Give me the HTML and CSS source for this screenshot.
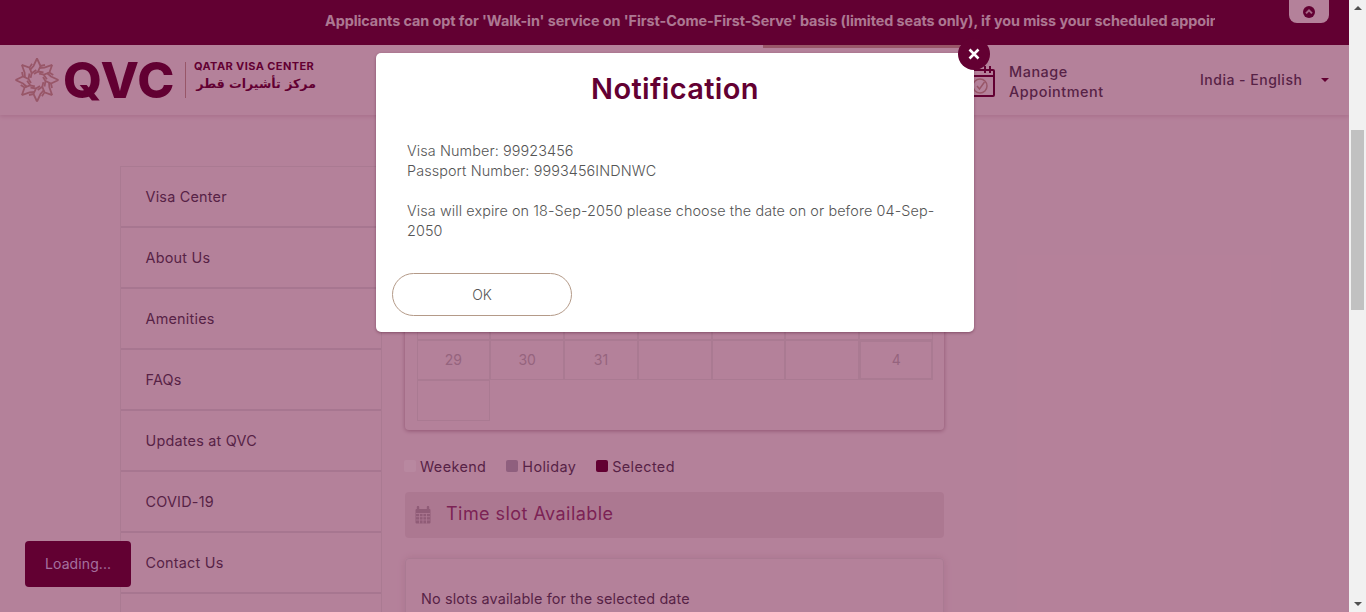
FILE: index.html
```html
<!DOCTYPE html>
<html lang="en">
<head>
<meta charset="utf-8">
<title>Qatar Visa Center</title>
<link rel="stylesheet" href="styles.css">
</head>
<body>
<div class="window">
  <div class="page">
    <div class="topbar">
      <div class="marquee">Applicants can opt for 'Walk-in' service on 'First-Come-First-Serve' basis (limited seats only), if you miss your scheduled appointment</div>
      <div class="toggle">
        <svg class="toggle-icon" viewBox="0 0 12 12"><circle cx="6" cy="6" r="6" fill="#630032"/><path d="M3 7.400 6 4.400l3 3" fill="none" stroke="#d9b9c8" stroke-width="2"/></svg>
      </div>
    </div>
    <header class="header">
      <div class="logo">
        <svg class="star" viewBox="-22 -22 44 44">
          <defs><path id="petal" d="M0-21.500 3.500-14 1-8.500 6.500-7.500M0-21.500-3.500-14-7-10M3.500-14 8-15M1-8.500-3-6" fill="none" stroke="#c29a92" stroke-width="1.800"/></defs>
          <use href="#petal"/><use href="#petal" transform="rotate(45)"/><use href="#petal" transform="rotate(90)"/><use href="#petal" transform="rotate(135)"/><use href="#petal" transform="rotate(180)"/><use href="#petal" transform="rotate(225)"/><use href="#petal" transform="rotate(270)"/><use href="#petal" transform="rotate(315)"/>
        </svg>
        <span class="logo-mark">QVC</span>
        <span class="logo-rule"></span>
        <span class="logo-names">
          <span class="logo-en">QATAR VISA CENTER</span>
          <span class="logo-ar" lang="ar" dir="rtl">مركز تأشيرات قطر</span>
        </span>
      </div>
      <span class="tab-mark"></span>
      <svg class="cal-icon" viewBox="0 0 25 34"><path d="M2 7h21a1 1 0 0 1 1 1v24a1 1 0 0 1-1 1H2a1 1 0 0 1-1-1V8a1 1 0 0 1 1-1ZM1 13h23" fill="none" stroke="#630032" stroke-width="2"/><path d="M15 3v7M20 3v7" stroke="#630032" stroke-width="2"/><circle cx="10" cy="23" r="7" fill="none" stroke="#c29a92" stroke-width="1.500"/><path d="m7 23 2.500 3 5-7" fill="none" stroke="#c29a92" stroke-width="1.500"/></svg>
      <div class="manage">Manage<br>Appointment</div>
      <div class="lang">India - English</div>
      <span class="caret"></span>
    </header>
    <div class="content">
      <nav class="sidebar">
        <a class="side-item">Visa Center</a>
        <a class="side-item">About Us</a>
        <a class="side-item">Amenities</a>
        <a class="side-item">FAQs</a>
        <a class="side-item">Updates at QVC</a>
        <a class="side-item">COVID-19</a>
        <a class="side-item">Contact Us</a>
        <a class="side-item"></a>
      </nav>
      <main class="main">
        <section class="calendar">
          <div class="day"></div><div class="day"></div><div class="day"></div><div class="day"></div><div class="day"></div><div class="day"></div><div class="day"></div>
          <div class="day"></div><div class="day"></div><div class="day"></div><div class="day"></div><div class="day"></div><div class="day"></div><div class="day"></div>
          <div class="day"></div><div class="day"></div><div class="day"></div><div class="day"></div><div class="day"></div><div class="day"></div><div class="day"></div>
          <div class="day"></div><div class="day"></div><div class="day"></div><div class="day"></div><div class="day"></div><div class="day"></div><div class="day"></div>
          <div class="day">29</div><div class="day">30</div><div class="day">31</div><div class="day"></div><div class="day"></div><div class="day"></div><div class="day day-off">4</div>
          <div class="day"></div>
        </section>
        <div class="legend">
          <span class="legend-item"><i class="swatch swatch-weekend"></i>Weekend</span>
          <span class="legend-item"><i class="swatch swatch-holiday"></i>Holiday</span>
          <span class="legend-item"><i class="swatch swatch-selected"></i>Selected</span>
        </div>
        <div class="slot-bar">
          <svg class="slot-icon" viewBox="0 0 16 18"><path d="M1.500 3h13a1 1 0 0 1 1 1v12.500a1 1 0 0 1-1 1h-13a1 1 0 0 1-1-1V4a1 1 0 0 1 1-1Z" fill="#b4a4ae"/><path d="M3 1v4M13 1v4" stroke="#b4a4ae" stroke-width="2.400" stroke-linecap="round"/><path d="M1 7.500h14M1 10.700h14M1 14h14M4.500 7.500v10M8 7.500v10M11.500 7.500v10" stroke="#e7d6dc" stroke-width=".8"/></svg>
          <span class="slot-label">Time slot Available</span>
        </div>
        <section class="slots">No slots available for the selected date</section>
      </main>
    </div>
    <div class="loading">Loading...</div>
    <div class="overlay"></div>
    <div class="modal">
      <button class="close" type="button" aria-label="Close"><svg viewBox="0 0 12 12"><path d="M1.500 1.500l9 9M10.500 1.500l-9 9" stroke="#fff" stroke-width="2.600"/></svg></button>
      <h2 class="modal-title">Notification</h2>
      <p class="modal-text">Visa Number: 99923456<br>Passport Number: 9993456INDNWC<br><br>Visa will expire on 18-Sep-2050 please choose the date on or before 04-Sep-2050</p>
      <button class="ok" type="button">OK</button>
    </div>
  </div>
  <div class="scrollbar">
    <span class="arrow-up"></span>
    <span class="thumb"></span>
    <span class="arrow-down"></span>
  </div>
</div>
</body>
</html>
```

FILE: styles.css
```css
* { box-sizing: border-box; }
html, body { margin: 0; height: 100%; }
body { font-family: Inter, "Open Sans", sans-serif; overflow: hidden; }

.window { display: flex; height: 612px; }
.page { position: relative; width: 1349px; height: 612px; overflow: hidden; background: #f5e6ec; color: #4f3e56; }

.topbar { display: flex; height: 45px; padding-left: 325px; background: #630032; }
.marquee { width: 890px; overflow: hidden; white-space: nowrap; color: #e6d6de; font-size: 14.400px; font-weight: 700; letter-spacing: -.07px; line-height: 41px; }
.toggle { display: flex; justify-content: center; align-items: center; width: 40px; height: 23px; margin-left: 74px; background: #f5e6ec; border-radius: 0 0 8px 8px; }
.toggle-icon { width: 12px; height: 12px; }

.header { display: flex; align-items: center; height: 70px; padding-left: 16px; background: #f5e6ec; box-shadow: 0 2px 4px rgba(99, 0, 50, .12); position: relative; }
.logo { display: flex; flex: none; align-items: center; width: 300px; }
.star { width: 44px; height: 44px; flex: none; margin-left: -1px; }
.logo-mark { margin-left: 4px; color: #630032; font-size: 50px; font-weight: 800; letter-spacing: .5px; line-height: 44px; }
.logo-rule { flex: none; width: 1px; height: 36px; margin-left: 10px; background: #c29a92; }
.logo-names { display: flex; flex-direction: column; flex: none; width: 122px; margin-left: 8px; padding-bottom: 7px; }
.logo-en { color: #630032; font-size: 11px; font-weight: 700; letter-spacing: .4px; line-height: 14px; white-space: nowrap; }
.logo-ar { color: #630032; font-family: "DejaVu Sans", sans-serif; font-size: 12.600px; font-weight: 700; line-height: 22px; white-space: nowrap; }

.tab-mark { align-self: flex-start; flex: none; width: 197px; height: 3px; margin-left: 447px; background: #c29a92; }
.cal-icon { width: 25px; height: 34px; margin-left: 10px; flex: none; }
.manage { flex: none; width: 191px; margin-left: 14px; padding-top: 4px; font-size: 14.400px; font-weight: 500; letter-spacing: .55px; line-height: 20px; }
.lang { flex: none; width: 121px; padding-bottom: 1px; font-size: 14px; font-weight: 500; letter-spacing: .5px; }
.caret { width: 0; height: 0; border: 4px solid transparent; border-top-color: #630032; border-bottom: 0; }

.content { display: flex; align-items: flex-start; padding: 51px 0 0 120px; }
.sidebar { display: flex; flex-direction: column; width: 262px; border-left: 1px solid #e2dade; border-right: 1px solid #e2dade; border-top: 1px solid #e2dade; }
.side-item { display: flex; align-items: center; height: 61px; padding: 0 0 1px 24.500px; border-bottom: 2px solid #ded3da; font-size: 14.400px; letter-spacing: .22px; }

.main { width: 539px; margin-left: 23px; }
.calendar { display: grid; grid-template-columns: repeat(7, 73.800px); grid-auto-rows: 40.500px; height: 264px; padding: 11.500px 0 0 11.500px; border-radius: 4px; box-shadow: 0 1px 4px rgba(60, 0, 30, .35); }
.day { display: flex; justify-content: center; align-items: center; border: 1px solid #e2dade; color: #beb2b9; font-size: 14px; }
.day-off { border-width: 2px; }

.legend { display: flex; gap: 20px; height: 62px; padding-top: 28px; margin-left: -1px; font-size: 14.400px; letter-spacing: .4px; }
.legend-item { display: flex; align-items: center; gap: 4px; height: 16px; }
.swatch { width: 12px; height: 12px; border-radius: 2px; }
.swatch-weekend { background: #fbf3f7; }
.swatch-holiday { background: #b2aab9; }
.swatch-selected { background: #630032; }

.slot-bar { display: flex; align-items: center; gap: 15px; height: 46px; padding-left: 10px; background: #e7d6dc; border-radius: 4px; color: #913e71; font-size: 18px; letter-spacing: .45px; }
.slot-icon { width: 16px; height: 18px; }
.slot-label { padding-bottom: 3px; }
.slots { height: 90px; margin-top: 20px; padding: 31px 15px; border: 1px solid #e2dade; border-radius: 4px; box-shadow: 0 0 8px rgba(60, 0, 30, .1); font-size: 14.400px; letter-spacing: .13px; line-height: 18px; }

.loading { position: absolute; left: 25px; top: 541px; width: 106px; height: 46px; padding: 14px 0 0 20px; background: #630032; border-radius: 4px; color: #d8c8f0; font-size: 14px; letter-spacing: .1px; line-height: 17px; }

.overlay { position: absolute; inset: 0; background: rgba(99, 0, 49, .44); }
.modal { position: absolute; left: 376px; top: 53px; width: 598px; height: 279px; padding: 18px 16px 0; background: #fff; border-radius: 5px; box-shadow: 0 1px 3px rgba(60, 0, 30, .4); }
.close { position: absolute; right: -16px; top: -15px; display: flex; justify-content: center; align-items: center; width: 32px; height: 32px; padding: 0; border: 0; border-radius: 50%; background: #630032; }
.close svg { width: 12px; height: 12px; }
.modal-title { margin: 0; color: #630032; font-size: 29px; font-weight: 600; letter-spacing: .35px; line-height: 36px; text-align: center; }
.modal-text { margin: 34px 0 0; padding: 0 15px; color: #555; font-size: 14.400px; font-weight: 300; letter-spacing: .1px; line-height: 20px; }
.ok { display: block; width: 180px; height: 43px; margin-top: 32px; padding-bottom: 2px; background: #fff; border: 1px solid #b49a88; border-radius: 22px; color: #555; font-family: inherit; font-size: 14px; font-weight: 300; }

.scrollbar { display: flex; flex-direction: column; align-items: center; width: 17px; height: 612px; background: #f1f1f1; }
.arrow-up { margin-top: 6px; border: 4px solid transparent; border-bottom-color: #505050; border-top: 0; }
.thumb { width: 13px; height: 180px; margin-top: 120px; background: #c1c1c1; }
.arrow-down { margin-top: auto; margin-bottom: 6px; border: 4px solid transparent; border-top-color: #505050; border-bottom: 0; }
```
